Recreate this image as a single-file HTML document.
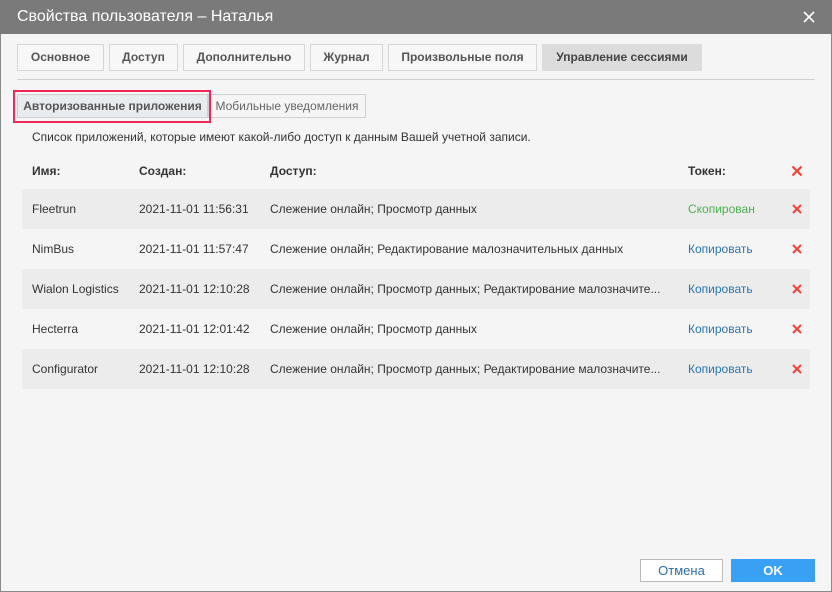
<!DOCTYPE html>
<html><head><meta charset="utf-8"><style>
*{box-sizing:border-box;margin:0;padding:0}
body{width:832px;height:592px;overflow:hidden;font-family:"Liberation Sans",sans-serif;font-size:12px;color:#333;background:#f5f5f5;position:relative}
.frame{position:absolute;left:0;top:0;width:832px;height:592px;border:1px solid #8a8a8a;border-top:none}
.title{position:absolute;left:0;top:0;width:832px;height:34px;background:#7a7a7a;color:#fff;font-size:16px;line-height:34px;padding-left:17px}
.close{position:absolute;right:17px;top:11px;width:12px;height:12px}
.t{position:absolute;top:44px;height:27px;border:1px solid #d6d6d6;background:#f7f7f7;font-weight:bold;color:#555;font-size:12px;line-height:25px;text-align:center}
.t.a{background:#dcdcdc;border-color:#dcdcdc;color:#444}
.hr{position:absolute;left:17px;top:79px;width:798px;height:1px;background:#d0d0d0}
.s{position:absolute;top:94px;height:24px;border:1px solid #d0d0d0;line-height:22px;text-align:center;color:#666}
.red{position:absolute;left:13px;top:90px;width:198px;height:33px;border:2px solid #f0285a}
.desc{position:absolute;left:32px;top:130px;line-height:14px}
.row{position:absolute;left:22px;width:788px;height:40px;line-height:40px}
.row.g{background:#ececec}
.row span{position:absolute;top:0;white-space:nowrap}
.c1{left:10px}.c2{left:117px}.c3{left:248px}.c4{left:666px}
.x{left:769px;top:14px!important;width:12px;height:12px}
.h{font-weight:bold;color:#333}
.blue{color:#2b74b0}.green{color:#4caf50}
.btn{position:absolute;top:559px;height:23px;line-height:21px;text-align:center;font-size:13px}
</style></head><body>
<div class="frame"></div>
<div class="title">Свойства пользователя – Наталья
<svg class="close" viewBox="0 0 12 12"><path d="M1 1L11 11M11 1L1 11" stroke="#fff" stroke-width="1.6"/></svg></div>
<div class="t" style="left:17px;width:87px">Основное</div>
<div class="t" style="left:109px;width:69px">Доступ</div>
<div class="t" style="left:183px;width:122px">Дополнительно</div>
<div class="t" style="left:310px;width:73px">Журнал</div>
<div class="t" style="left:388px;width:149px">Произвольные поля</div>
<div class="t a" style="left:542px;width:160px">Управление сессиями</div>
<div class="hr"></div>
<div class="s" style="left:17px;width:191px;background:#e9ecee;font-weight:bold;color:#555">Авторизованные приложения</div>
<div class="s" style="left:208px;width:158px">Мобильные уведомления</div>
<div class="red"></div>
<div class="desc">Список приложений, которые имеют какой-либо доступ к данным Вашей учетной записи.</div>
<div class="row h" style="top:151px"><span class="c1">Имя:</span><span class="c2">Создан:</span><span class="c3">Доступ:</span><span class="c4">Токен:</span><svg class="x" style="position:absolute" viewBox="0 0 12 12"><path d="M1.5 1.5L10.5 10.5M10.5 1.5L1.5 10.5" stroke="#f44336" stroke-width="2.2"/></svg></div>
<div class="row g" style="top:189px"><span class="c1">Fleetrun</span><span class="c2">2021-11-01 11:56:31</span><span class="c3">Слежение онлайн; Просмотр данных</span><span class="c4 green">Скопирован</span><svg class="x" style="position:absolute" viewBox="0 0 12 12"><path d="M2 2L10 10M10 2L2 10" stroke="#f44336" stroke-width="2"/></svg></div>
<div class="row" style="top:229px"><span class="c1">NimBus</span><span class="c2">2021-11-01 11:57:47</span><span class="c3">Слежение онлайн; Редактирование малозначительных данных</span><span class="c4 blue">Копировать</span><svg class="x" style="position:absolute" viewBox="0 0 12 12"><path d="M2 2L10 10M10 2L2 10" stroke="#f44336" stroke-width="2"/></svg></div>
<div class="row g" style="top:269px"><span class="c1">Wialon Logistics</span><span class="c2">2021-11-01 12:10:28</span><span class="c3">Слежение онлайн; Просмотр данных; Редактирование малозначите...</span><span class="c4 blue">Копировать</span><svg class="x" style="position:absolute" viewBox="0 0 12 12"><path d="M2 2L10 10M10 2L2 10" stroke="#f44336" stroke-width="2"/></svg></div>
<div class="row" style="top:309px"><span class="c1">Hecterra</span><span class="c2">2021-11-01 12:01:42</span><span class="c3">Слежение онлайн; Просмотр данных</span><span class="c4 blue">Копировать</span><svg class="x" style="position:absolute" viewBox="0 0 12 12"><path d="M2 2L10 10M10 2L2 10" stroke="#f44336" stroke-width="2"/></svg></div>
<div class="row g" style="top:349px"><span class="c1">Configurator</span><span class="c2">2021-11-01 12:10:28</span><span class="c3">Слежение онлайн; Просмотр данных; Редактирование малозначите...</span><span class="c4 blue">Копировать</span><svg class="x" style="position:absolute" viewBox="0 0 12 12"><path d="M2 2L10 10M10 2L2 10" stroke="#f44336" stroke-width="2"/></svg></div>
<div class="btn" style="left:640px;width:83px;border:1px solid #bbb;background:#fff;color:#2b6ea8">Отмена</div>
<div class="btn" style="left:731px;width:84px;background:#3aa0f3;color:#fff;font-weight:bold;line-height:23px">OK</div>
</body></html>
